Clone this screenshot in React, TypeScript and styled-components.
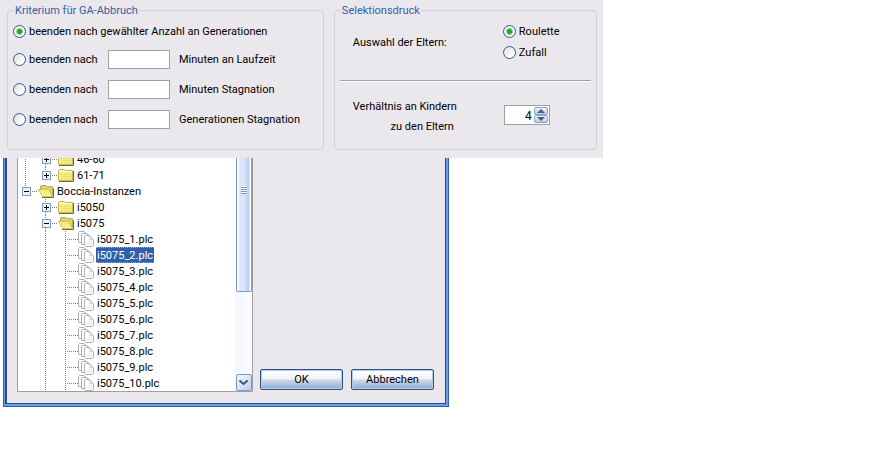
import React, { useState } from "react";
import styled, { createGlobalStyle } from "styled-components";

const GlobalStyle = createGlobalStyle`
  *, *::before, *::after { box-sizing: border-box; }
  body {
    margin: 0;
    background: #ffffff;
    color: #000000;
    font-family: Roboto, "Liberation Sans", sans-serif;
    font-size: 11px;
    line-height: 16px;
  }
  button, input { font: inherit; color: inherit; }
`;

const surface = "#ebe8ed";
const fieldBorder = "#a0a0a4";
const accent = "#3160a8";

const Page = styled.main`
  display: flex;
  flex-direction: column;
`;

/* Settings strip */

const SettingsRow = styled.div`
  display: grid;
  grid-template-columns: 67fr 30fr;
`;

const SettingsPanel = styled.form`
  display: flex;
  gap: 10px;
  padding: 2px 6px 8px 7px;
  background: ${surface};
`;

const Group = styled.fieldset<{ $grow: number }>`
  flex: ${(p) => p.$grow} 1 0;
  min-width: 0;
  margin: 0;
  padding: 0 5px;
  border: 1px solid #d2d0d2;
  border-radius: 4px;
`;

const GroupTitle = styled.legend`
  margin-left: 1px;
  padding: 1px 1px 0;
  line-height: 15px;
  color: ${accent};
`;

const CriterionRow = styled.div<{ $first?: boolean }>`
  display: grid;
  grid-template-columns: ${(p) => (p.$first ? "1fr" : "95px 62px 1fr")};
  align-items: center;
  height: ${(p) => (p.$first ? "26px" : "30px")};

  &:last-child { margin-bottom: 15px; }
`;

const RadioLabel = styled.label`
  display: flex;
  align-items: center;
  gap: 3px;
  height: 16px;
  white-space: nowrap;
`;

const LabelText = styled.span`
  padding-top: 1px;
`;

const Radio = styled.input.attrs({ type: "radio" })`
  appearance: none;
  flex: none;
  width: 13px;
  height: 13px;
  margin: 0;
  border: 1px solid #2c5c8c;
  border-radius: 50%;
  background: linear-gradient(135deg, #dcdcd8, #ffffff 75%);

  &:checked {
    background: radial-gradient(circle, #22a822 0 2px, #8fd68f 3px, #f6f6f4 4px);
  }
`;

const ValueField = styled.input.attrs({ type: "text" })`
  width: 62px;
  height: 19px;
  padding: 0 3px;
  border: 1px solid ${fieldBorder};
  background: #ffffff;
`;

const Unit = styled.span`
  padding: 1px 0 0 9px;
  white-space: nowrap;
`;

const SelectionRow = styled.div`
  display: grid;
  grid-template-columns: 101px 1fr;
  column-gap: 49px;
  align-items: center;
  padding: 0 13px;
  white-space: nowrap;
`;

const RadioStack = styled.div`
  display: flex;
  flex-direction: column;
  gap: 5px;
  padding: 5px 0 20px;
`;

const SelectionTitle = styled.span`
  padding-bottom: 13px;
`;

const Divider = styled.hr`
  height: 2px;
  margin: 0;
  border: 0;
  border-top: 1px solid ${fieldBorder};
  background: #ffffff;
`;

const RatioRow = styled(SelectionRow)`
  padding-top: 14px;
`;

const RatioLabel = styled.label`
  padding-top: 1px;
  text-align: right;
  line-height: 20px;
`;

const Spinner = styled.div`
  display: flex;
  width: 46px;
  height: 20px;
  margin-bottom: 4px;
  margin-left: 1px;
  border: 1px solid ${fieldBorder};
  background: #ffffff;
`;

const SpinnerInput = styled.input`
  flex: 1;
  min-width: 0;
  padding: 2px 2px 0 0;
  border: 0;
  background: transparent;
  text-align: right;
  font-size: 12px;
`;

const SpinnerButtons = styled.div`
  display: flex;
  flex-direction: column;
  width: 15px;
  padding: 1px 1px 1px 0;
`;

const SpinButton = styled.button`
  display: flex;
  flex: 1;
  align-items: center;
  justify-content: center;
  padding: 0;
  border: 1px solid #8aa3c4;
  border-radius: 2px;
  background: linear-gradient(#eef4fd, #b5cdef);
`;

/* File dialog */

const DialogRow = styled.div`
  display: grid;
  grid-template-columns: 446fr 424fr;
  padding-left: 3px;
`;

const Frame = styled.section`
  border: 1px solid #2f5fb4;
  border-top: 0;
  background: #6c9fe0;
  padding: 0 2px 2px 1px;
`;

const FrameBody = styled.div`
  display: flex;
  gap: 7px;
  padding: 0 11px 11px 10px;
  border: solid #244a98;
  border-width: 0 1px 1px 2px;
  background: ${surface};
`;

const TreePane = styled.div`
  display: flex;
  flex: 235 1 0;
  min-width: 0;
  border: solid ${fieldBorder};
  border-width: 0 1px 1px;
  background: #ffffff;
`;

const TreeViewport = styled.div`
  flex: 1;
  min-width: 0;
  height: 233px;
  overflow: hidden;
`;

const TreeList = styled.ul`
  margin: -7px 0 0;
  padding: 0;
  list-style: none;
`;

const TreeRow = styled.li`
  display: flex;
  align-items: center;
  height: 16px;
`;

const Cell = styled.span`
  display: flex;
  flex: none;
  align-items: center;
  width: 20px;
  height: 16px;
`;

const IconCell = styled(Cell)`
  width: 18px;
`;

const ToggleCell = styled.button`
  display: block;
  flex: none;
  width: 20px;
  height: 16px;
  padding: 0;
  border: 0;
  background: transparent;
`;

const NodeLabel = styled.span<{ $selected?: boolean }>`
  height: 16px;
  padding: 0 1px;
  border: 1px dotted ${(p) => (p.$selected ? "#d8a05a" : "transparent")};
  border-width: 1px 0;
  line-height: 16px;
  white-space: nowrap;
  background: ${(p) => (p.$selected ? accent : "transparent")};
  color: ${(p) => (p.$selected ? "#ffffff" : "#000000")};
`;

const ScrollBar = styled.div`
  display: flex;
  flex-direction: column;
  flex: none;
  width: 17px;
  padding-left: 1px;
  background: linear-gradient(90deg, #f3f7fe, #fbfcff);
`;

const ScrollThumb = styled.div`
  display: flex;
  justify-content: center;
  height: 134px;
  padding-top: 28px;
  border: solid #7f97b8;
  border-width: 0 1px 1px 1px;
  border-radius: 0 0 2px 2px;
  background: linear-gradient(90deg, #ffffff 0 1px, #d3e4fb 3px, #dbe9fc 6px, #b6cff0 12px, #ffffff 13px);
`;

const ScrollGrip = styled.span`
  width: 6px;
  height: 8px;
  background: repeating-linear-gradient(#ffffff 0 1px, #8095ae 1px 2px);
`;

const ScrollButton = styled.button`
  display: flex;
  align-items: center;
  justify-content: center;
  height: 17px;
  margin-top: auto;
  padding: 0;
  border: 1px solid #7f97b8;
  border-radius: 2px;
  background: linear-gradient(135deg, #f1f6fe, #b9d0f0);
`;

const Actions = styled.div`
  display: flex;
  flex: 175 1 0;
  gap: 8px;
  align-items: flex-end;
  padding-bottom: 2px;
`;

const ActionButton = styled.button`
  flex: 1;
  height: 21px;
  padding: 0;
  border: 1px solid #2a5184;
  border-radius: 2px;
  background: linear-gradient(#ffffff, #eff3fa 45%, #ccd7e8 55%, #8ea9cf);
  box-shadow: inset 0 0 0 1px #b9cbe4;
  line-height: 19px;
`;

type Toggle = "plus" | "minus";

const ToggleMark = ({ kind, above, below }: { kind: Toggle; above: boolean; below: boolean }) => (
  <svg width="20" height="16" viewBox="0 0 20 16" shapeRendering="crispEdges" aria-hidden="true">
    <g stroke="#808080" strokeDasharray="1 1">
      {above && <path d="M7.5 0V4" />}
      {below && <path d="M7.5 13V16" />}
      <path d="M14 8.5H20" />
    </g>
    <rect x="4.5" y="4.5" width="8" height="8" fill="#eef2f6" stroke="#7f9bbd" />
    <path d="M6 8.5H11" stroke="#000" />
    {kind === "plus" && <path d="M8.5 6V11" stroke="#000" />}
  </svg>
);

const Guide = ({ branch }: { branch?: boolean }) => (
  <svg width="20" height="16" viewBox="0 0 20 16" shapeRendering="crispEdges" aria-hidden="true">
    <g stroke="#808080" strokeDasharray="1 1">
      <path d="M7.5 0V16" />
      {branch && <path d="M7 8.5H20" />}
    </g>
  </svg>
);

const Folder = ({ open }: { open?: boolean }) => (
  <svg width="18" height="16" viewBox="0 0 18 16" aria-hidden="true">
    {open ? (
      <>
        <path d="M4 14.5H15.5V5.5" fill="none" stroke="#6b6a3e" />
        <path d="M2.5 8V3L3.5 2.5H8L9 3.5H14.5V12.5H5Z" fill="#dcd268" stroke="#b8ae50" />
        <path d="M.5 6.5H10.5L14.5 13.5H4.5Z" fill="#f8f08a" stroke="#cdc35e" />
        <path d="M3 8.5H10M5 10.5H11" stroke="#e3d75c" strokeDasharray="1 2" />
      </>
    ) : (
      <>
        <path d="M1 14.5H15.5V4" fill="none" stroke="#6b6a3e" />
        <path d="M.5 13.5V3.5L1.5 2.5H6.5L7.5 3.5H14.5V13.5Z" fill="#f5ed80" stroke="#c4ba58" />
        <path d="M1.5 4.5H14" stroke="#fffbc0" />
        <path d="M3 7.5H13M4 9.5H14M3 11.5H13" stroke="#dccf52" strokeDasharray="1 2" />
      </>
    )}
  </svg>
);

const Files = () => (
  <svg width="18" height="16" viewBox="0 0 18 16" aria-hidden="true">
    <g fill="#fdfdfd" stroke="#b0b0b0">
      <path d="M.5 11.5V1.5L1.5 .5H6L9.5 4V11.5Z" />
      <path d="M3.5 13.5V3L4.5 2.5H9L12.5 6V13.5Z" />
      <path d="M6.5 14.5V5L7.5 4.5H11.5L15.5 8.5V14.5L14.5 15.5H7.5Z" />
    </g>
    <path d="M11.5 5V8.5H15" fill="#ececec" stroke="#d4d4d4" />
    <path d="M8 12L14 9.5V14H8Z" fill="#f1f1f1" />
  </svg>
);

interface FolderNode {
  name: string;
  level: 1 | 2;
  toggle: Toggle;
  above: boolean;
  below: boolean;
  trunk?: boolean;
}

const folders: FolderNode[] = [
  { name: "46-60", level: 2, toggle: "plus", above: true, below: true, trunk: true },
  { name: "61-71", level: 2, toggle: "plus", above: true, below: false, trunk: true },
  { name: "Boccia-Instanzen", level: 1, toggle: "minus", above: true, below: false },
  { name: "i5050", level: 2, toggle: "plus", above: true, below: true },
  { name: "i5075", level: 2, toggle: "minus", above: true, below: true },
];

const files = Array.from({ length: 10 }, (_, i) => `i5075_${i + 1}.plc`);

const limits = [
  { id: "runtime", unit: "Minuten an Laufzeit" },
  { id: "stagnationTime", unit: "Minuten Stagnation" },
  { id: "stagnationGenerations", unit: "Generationen Stagnation" },
];

export default function App() {
  const [selected, setSelected] = useState("i5075_2.plc");
  const [ratio, setRatio] = useState(4);

  return (
    <Page>
      <GlobalStyle />
      <SettingsRow>
        <SettingsPanel>
          <Group $grow={318}>
            <GroupTitle>Kriterium für GA-Abbruch</GroupTitle>
            <CriterionRow $first>
              <RadioLabel>
                <Radio name="criterion" defaultChecked />
                <LabelText>beenden nach gewählter Anzahl an Generationen</LabelText>
              </RadioLabel>
            </CriterionRow>
            {limits.map((limit) => (
              <CriterionRow key={limit.id}>
                <RadioLabel>
                  <Radio name="criterion" />
                  <LabelText>beenden nach</LabelText>
                </RadioLabel>
                <ValueField aria-labelledby={limit.id} />
                <Unit id={limit.id}>{limit.unit}</Unit>
              </CriterionRow>
            ))}
          </Group>
          <Group $grow={262}>
            <GroupTitle>Selektionsdruck</GroupTitle>
            <SelectionRow role="radiogroup" aria-labelledby="parents">
              <SelectionTitle id="parents">Auswahl der Eltern:</SelectionTitle>
              <RadioStack>
                <RadioLabel>
                  <Radio name="parents" defaultChecked />
                  <LabelText>Roulette</LabelText>
                </RadioLabel>
                <RadioLabel>
                  <Radio name="parents" />
                  <LabelText>Zufall</LabelText>
                </RadioLabel>
              </RadioStack>
            </SelectionRow>
            <Divider />
            <RatioRow>
              <RatioLabel htmlFor="ratio">
                Verhältnis an Kindern
                <br />
                zu den Eltern
              </RatioLabel>
              <Spinner>
                <SpinnerInput
                  id="ratio"
                  inputMode="numeric"
                  value={ratio}
                  onChange={(e) => setRatio(Number(e.target.value) || 0)}
                />
                <SpinnerButtons>
                  <SpinButton type="button" aria-label="Erhöhen" onClick={() => setRatio(ratio + 1)}>
                    <svg width="8" height="4" viewBox="0 0 8 4" aria-hidden="true">
                      <path d="M4 0L8 4H0Z" fill="#4a5b75" />
                    </svg>
                  </SpinButton>
                  <SpinButton type="button" aria-label="Verringern" onClick={() => setRatio(ratio - 1)}>
                    <svg width="8" height="4" viewBox="0 0 8 4" aria-hidden="true">
                      <path d="M0 0H8L4 4Z" fill="#4a5b75" />
                    </svg>
                  </SpinButton>
                </SpinnerButtons>
              </Spinner>
            </RatioRow>
          </Group>
        </SettingsPanel>
      </SettingsRow>

      <DialogRow>
        <Frame>
          <FrameBody>
            <TreePane>
              <TreeViewport>
                <TreeList role="tree">
                  {folders.map((f) => (
                    <TreeRow key={f.name} role="treeitem" aria-expanded={f.toggle === "minus"}>
                      {f.level === 2 && <Cell>{f.trunk && <Guide />}</Cell>}
                      <ToggleCell aria-label={f.name}>
                        <ToggleMark kind={f.toggle} above={f.above} below={f.below} />
                      </ToggleCell>
                      <IconCell>
                        <Folder open={f.toggle === "minus"} />
                      </IconCell>
                      <NodeLabel>{f.name}</NodeLabel>
                    </TreeRow>
                  ))}
                  {files.map((name) => (
                    <TreeRow
                      key={name}
                      role="treeitem"
                      aria-selected={name === selected}
                      onClick={() => setSelected(name)}
                    >
                      <Cell />
                      <Cell>
                        <Guide />
                      </Cell>
                      <Cell>
                        <Guide branch />
                      </Cell>
                      <IconCell>
                        <Files />
                      </IconCell>
                      <NodeLabel $selected={name === selected}>{name}</NodeLabel>
                    </TreeRow>
                  ))}
                </TreeList>
              </TreeViewport>
              <ScrollBar>
                <ScrollThumb>
                  <ScrollGrip />
                </ScrollThumb>
                <ScrollButton aria-label="Nach unten">
                  <svg width="9" height="7" viewBox="0 0 9 7" aria-hidden="true">
                    <path d="M.5 1.5L4.5 5L8.5 1.5" fill="none" stroke="#46566e" strokeWidth="2" />
                  </svg>
                </ScrollButton>
              </ScrollBar>
            </TreePane>
            <Actions>
              <ActionButton>OK</ActionButton>
              <ActionButton>Abbrechen</ActionButton>
            </Actions>
          </FrameBody>
        </Frame>
      </DialogRow>
    </Page>
  );
}
